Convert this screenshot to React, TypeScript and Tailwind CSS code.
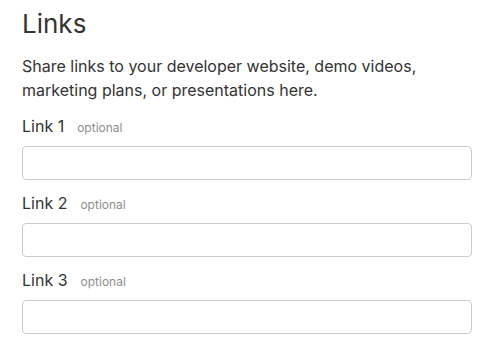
import React from 'react';

const links = ['Link 1', 'Link 2', 'Link 3'];

export default function App() {
  return (
    <div
      className="w-[491px] h-[346px] bg-white text-[#333333] px-[22px] pt-[6px] overflow-hidden"
      style={{ fontFamily: 'Inter, "Liberation Sans", Arial, sans-serif' }}
    >
      <h1 className="text-[26px] leading-[36px] font-normal text-[#333333]">Links</h1>
      <p className="mt-[12px] text-[16px] leading-[24px] text-[#333333]">
        Share links to your developer website, demo videos, marketing plans, or presentations here.
      </p>
      <div className="mt-[12px] flex flex-col gap-[11px]">
        {links.map((label) => (
          <div key={label} className="flex flex-col">
            <label className="flex items-baseline gap-[13px] h-[24px] leading-[24px]">
              <span className="text-[16px] text-[#333333]">{label}</span>
              <span className="text-[12px] text-[#8e8e8e]">optional</span>
            </label>
            <input
              type="text"
              className="mt-[8px] h-[34px] w-[450px] rounded-[4px] border border-[#cccccc] bg-white px-2 outline-none"
            />
          </div>
        ))}
      </div>
    </div>
  );
}
